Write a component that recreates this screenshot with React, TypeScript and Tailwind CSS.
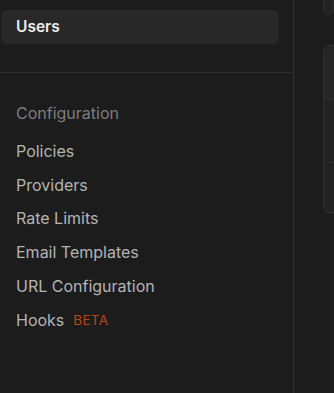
import React from "react";

const items = ["Policies", "Providers", "Rate Limits", "Email Templates", "URL Configuration"];

export default function App() {
  return (
    <div
      className="flex h-[393px] w-[334px] overflow-hidden bg-[#1c1c1c]"
      style={{ fontFamily: "Inter, 'Noto Sans', sans-serif" }}
    >
      <aside className="flex w-[294px] shrink-0 flex-col border-r border-[#2e2e2e]">
        <div className="pt-[10px] pb-[28px]">
          <div className="ml-px mr-[14px] flex h-[34px] items-center rounded-md bg-[#282828] pl-[15px] text-[15.5px] font-semibold text-[#ededed]">
            Users
          </div>
        </div>
        <div className="h-px w-full bg-[#2a2a2a]" />
        <div className="flex flex-col px-4 pt-[28px]">
          <div className="flex h-[24px] items-center text-[16px] text-[#7c7c7c]">Configuration</div>
          <div className="mt-[9px] flex flex-col">
            {items.map((t) => (
              <div key={t} className="flex h-[33.8px] items-center text-[16px] text-[#b4b4b4]">
                {t}
              </div>
            ))}
            <div className="flex h-[33.8px] items-center text-[16px] text-[#b4b4b4]">
              Hooks
              <span className="ml-[9px] text-[13.5px] tracking-[0.02em] text-[#b8470f]">BETA</span>
            </div>
          </div>
        </div>
      </aside>
      <div className="flex flex-1 flex-col pl-[29px]">
        <div className="-mt-4 h-[31px] rounded-b-md rounded-t-md border border-[#2e2e2e] bg-[#222222]" />
        <div className="mt-[30px] flex h-[168px] flex-col overflow-hidden rounded-l-md border border-r-0 border-[#2e2e2e] bg-[#222222]">
          <div className="h-[54px] shrink-0 border-b border-[#2e2e2e] bg-[#262626]" />
          <div className="h-[63px] shrink-0 border-b border-[#2e2e2e]" />
          <div className="flex-1" />
        </div>
      </div>
    </div>
  );
}
